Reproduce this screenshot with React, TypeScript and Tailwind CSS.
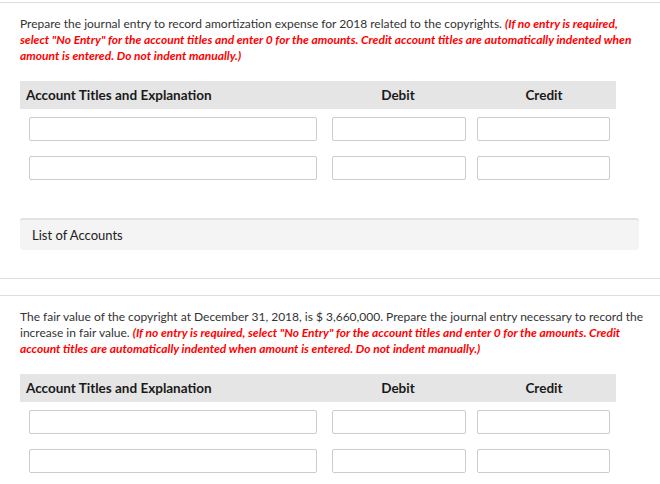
const Note = () => (
    <span className="font-bold italic text-[#ff0000]">
        (If no entry is required, select "No Entry" for the account titles and
        enter 0 for the amounts. Credit account titles are automatically
        indented when amount is entered. Do not indent manually.)
    </span>
)

const InputRow = () => (
    <div className="flex">
        <div className="ml-[9px] h-[24px] w-[288px] rounded-[2px] border border-[#cccccc] bg-white"></div>
        <div className="ml-[15px] h-[24px] w-[134px] rounded-[2px] border border-[#cccccc] bg-white"></div>
        <div className="ml-[11px] h-[24px] w-[133px] rounded-[2px] border border-[#cccccc] bg-white"></div>
    </div>
)

const JournalTable = () => (
    <div className="w-[596px]">
        <div className="flex h-[28px] items-center bg-[#e5e5e5] text-[13.5px] font-bold text-[#1a1a1a]">
            <div className="w-[304px] pl-[6px]">Account Titles and Explanation</div>
            <div className="w-[148px] text-center">Debit</div>
            <div className="w-[144px] text-center">Credit</div>
        </div>
        <div className="mt-[8px] flex flex-col gap-[15px]">
            <InputRow />
            <InputRow />
        </div>
    </div>
)

export default function App() {
    return (
        <div className="h-[484px] w-[660px] overflow-hidden bg-white font-['Lato','Liberation_Sans',sans-serif] text-[12px] leading-[16px] text-[#333333]">
            <div className="h-[2px]"></div>
            <section className="border-y border-[#dddddd] pt-[13px] pr-[16px] pb-[28px] pl-[20px]">
                <p>
                    Prepare the journal entry to record amortization expense for
                    2018 related to the copyrights. <Note />
                </p>
                <div className="mt-[17px]">
                    <JournalTable />
                </div>
                <div className="mt-[38px] flex h-[32px] w-[619px] items-center rounded-[3px] border-t-2 border-[#e2e2e2] bg-[#f4f4f4] pl-[12px] text-[13px] text-[#222222]">
                    List of Accounts
                </div>
            </section>
            <div className="h-[16px]"></div>
            <section className="border-t border-[#dddddd] pt-[13px] pr-[16px] pl-[20px]">
                <p>
                    The fair value of the copyright at December 31, 2018, is
                    $ 3,660,000. Prepare the journal entry necessary to record
                    the increase in fair value. <Note />
                </p>
                <div className="mt-[17px]">
                    <JournalTable />
                </div>
            </section>
        </div>
    )
}
